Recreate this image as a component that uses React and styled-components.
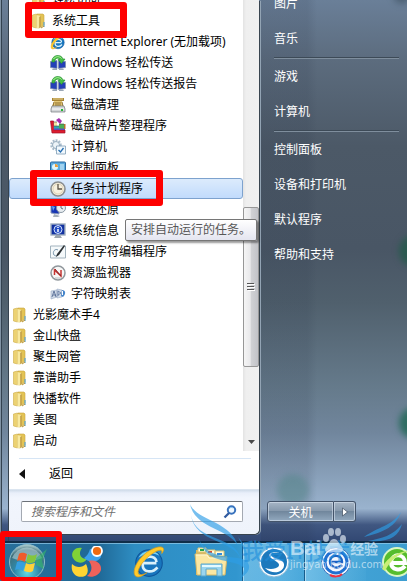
import React from "react";
import styled, { createGlobalStyle, css } from "styled-components";

const GlobalStyle = createGlobalStyle`
  * { box-sizing: border-box; }
  body {
    margin: 0;
    font-family: "Noto Sans", "Noto Sans CJK SC", sans-serif;
    font-size: 12px;
    color: #000;
  }
  button, input { font: inherit; color: inherit; }
  button { border: 0; background: none; padding: 0; text-align: left; }
  ul { list-style: none; margin: 0; padding: 0; }
  svg { display: block; flex: none; }
`;

const Desktop = styled.div`
  position: relative;
  display: flex;
  flex-direction: column;
  min-height: 100vh;
  overflow: hidden;
  background: #344a75;
`;

const StartMenu = styled.main`
  flex: 1;
  display: flex;
  padding-left: 9px;
  background:
    linear-gradient(90deg, #8193a4 0 1px, #334250 1px 2px, transparent 2px 8px, #35424f 8px 9px, transparent 9px),
    linear-gradient(180deg, #6a7f98 0%, #5c6c7e 11%, #4c5967 27%, #495665 46%, #50606d 56%, #667b8c 72%, #71869d 80%, #9ab3ce 94%, #405781 97%, #324873 100%);
`;

const ProgramsPanel = styled.section`
  display: flex;
  flex-direction: column;
  flex: 0 0 250px;
  margin-bottom: 7px;
  background: #fff;
  border-radius: 0 0 5px 5px;
  box-shadow: 1px 1px 0 #38444f, 2px 1px 0 #93a4b4;
`;

const Browser = styled.div`
  position: relative;
  display: flex;
  flex: 1;
`;

const Tree = styled.ul`
  flex: 1;
  margin-top: -11px;
`;

const indents = [2, 21, 40];

const TreeItem = styled.li`
  position: relative;
`;

const TreeRow = styled.button`
  display: flex;
  align-items: center;
  gap: 5px;
  width: 100%;
  height: 21px;
  padding-left: ${(p) => indents[p.$level]}px;
  border: 1px solid transparent;
  border-radius: 3px;
  white-space: nowrap;
  ${(p) =>
    p.$selected &&
    css`
      border-color: #7da2ce;
      background: linear-gradient(#dcebfc, #c1dbfc);
    `}
`;

const RowLabel = styled.span`
  padding-bottom: 2px;
`;

const Mark = styled.span`
  position: absolute;
  z-index: 2;
  top: -8px;
  bottom: -7px;
  left: ${(p) => p.$left}px;
  width: ${(p) => p.$width}px;
  border: 7px solid #fe0000;
  border-radius: 3px;
  pointer-events: none;
`;

const Tooltip = styled.div`
  position: absolute;
  z-index: 3;
  top: 219px;
  left: 116px;
  height: 22px;
  padding: 0 5px;
  line-height: 20px;
  color: #575757;
  white-space: nowrap;
  border: 1px solid #767676;
  border-radius: 2px;
  background: linear-gradient(#fff, #e4e5f0);
  box-shadow: 2px 2px 2px rgba(0, 0, 0, 0.4);
`;

const ScrollTrack = styled.div`
  display: flex;
  flex-direction: column;
  justify-content: space-between;
  width: 16px;
  padding-top: 207px;
  background: linear-gradient(90deg, #e3e3e3, #efefef 3px, #f0f0f0);
`;

const ScrollThumb = styled.div`
  display: flex;
  align-items: center;
  justify-content: center;
  height: 160px;
  border: 1px solid #979797;
  border-radius: 2px;
  background: linear-gradient(90deg, #f5f5f5, #e9e9eb 45%, #d1d2d5 50%, #c2c3c8);
`;

const ScrollDown = styled.button`
  display: flex;
  align-items: center;
  justify-content: center;
  height: 18px;
`;

const BackArea = styled.div`
  margin: 7px 8px 0 10px;
  border-top: 1px solid #d6e5f5;
`;

const BackButton = styled.button`
  display: flex;
  align-items: center;
  gap: 24px;
  width: 100%;
  height: 30px;
`;

const SearchArea = styled.form`
  padding: 11px 16px 12px 12px;
  border-radius: 0 0 5px 5px;
  background: linear-gradient(#cfdbe9, #e9effa 3px, #f1f5fd 8px, #eff3fb);
  border-top: 1px solid #dbe5f0;
`;

const SearchBox = styled.label`
  display: flex;
  align-items: center;
  height: 21px;
  padding: 0 5px 0 9px;
  background: #fff;
  border: 1px solid #a4a9b2;
  border-top-color: #6c7178;
  border-radius: 2px;
`;

const SearchInput = styled.input`
  flex: 1;
  min-width: 0;
  padding: 0;
  border: 0;
  outline: 0;
  background: none;
  &::placeholder { color: #6f6f6f; font-style: italic; opacity: 1; }
`;

const PlacesPanel = styled.nav`
  position: relative;
  display: flex;
  flex: 1;
  flex-direction: column;
  justify-content: space-between;
  min-width: 0;
  margin-left: 2px;
  padding: 0 8px 19px 6px;
  background: linear-gradient(90deg, rgba(35, 45, 65, 0.12) 0 46px, transparent 56px);
`;

const Places = styled.ul`
  margin-top: -14px;
  padding-left: 7px;
`;

const Place = styled.a`
  display: flex;
  align-items: center;
  height: 35px;
  color: #fff;
  text-decoration: none;
`;

const PlaceDivider = styled.li`
  height: 3px;
  border-top: 1px solid transparent;
  background: linear-gradient(#3d4a57 0 1px, #7f8e9d 1px 2px) padding-box;
`;

const Glow = styled.span`
  position: absolute;
  top: ${(p) => p.$top}px;
  right: ${(p) => p.$right}px;
  width: ${(p) => p.$size}px;
  height: ${(p) => p.$size}px;
  border-radius: 50%;
  background: ${(p) => p.$color};
  filter: blur(3px);
`;

const Power = styled.div`
  position: relative;
  display: flex;
  height: 21px;
`;

const PowerButton = styled.button`
  display: flex;
  align-items: center;
  justify-content: center;
  width: ${(p) => (p.$menu ? 22 : 67)}px;
  color: #fff;
  border: 1px solid #44546a;
  border-left-width: ${(p) => (p.$menu ? 0 : 1)}px;
  border-radius: ${(p) => (p.$menu ? "0 3px 3px 0" : "3px 0 0 3px")};
  background: linear-gradient(#a6b5c5, #8598ac 48%, #71879d 50%, #92a9bf);
  box-shadow: inset 0 0 0 1px rgba(220, 232, 244, 0.55);
`;

const Taskbar = styled.footer`
  position: relative;
  display: flex;
  height: 40px;
  border-top: 2px solid #102e49;
  background:
    linear-gradient(rgba(150, 205, 235, 0.7) 0 1px, transparent 1px),
    linear-gradient(90deg, #28709b 0, #1f6896 24%, #2e8dc2 33%, #3196cf 58%, #49a8dc 66%, #3d9ed1 100%);
`;

const TaskButton = styled.button`
  display: flex;
  flex: 0 0 ${(p) => (p.$start ? 56 : 62)}px;
  align-items: center;
  justify-content: center;
  ${(p) =>
    p.$open &&
    css`
      border-left: 1px solid #175c8c;
      background: linear-gradient(100deg, rgba(160, 217, 245, 0.5), rgba(100, 185, 225, 0.1));
      box-shadow: inset 1px 0 0 rgba(190, 230, 250, 0.7);
    `}
`;

const StartMark = styled.span`
  position: absolute;
  z-index: 4;
  left: 0;
  top: -12px;
  bottom: 0;
  width: 62px;
  border: 6px solid #fe0000;
  border-left-width: 5px;
  border-bottom-width: 4px;
  border-radius: 3px;
  pointer-events: none;
`;

const WatermarkLayer = styled.div`
  position: absolute;
  z-index: 5;
  bottom: 0;
  left: 188px;
  width: 219px;
  height: 80px;
  pointer-events: none;
`;

const BlueWatermark = styled.span`
  position: absolute;
  left: 54px;
  top: 33px;
  font-size: 22px;
  line-height: 32px;
  font-weight: 500;
  white-space: nowrap;
  color: rgba(31, 142, 220, 0.62);
`;

const SiteWatermark = styled.div`
  position: absolute;
  left: 102px;
  top: 36px;
  white-space: nowrap;
  color: rgba(240, 249, 255, 0.62);
`;

const SiteName = styled.div`
  display: flex;
  align-items: center;
  height: 22px;
  font-family: "Liberation Sans", "Noto Sans CJK SC", sans-serif;
  font-size: 20px;
  font-weight: 700;
`;

const SiteNameLocal = styled.span`
  font-size: 14px;
  padding-left: 3px;
`;

const PawMark = styled.span`
  display: flex;
  align-items: center;
  justify-content: center;
  position: relative;
  top: -8px;
  width: 26px;
`;

const SiteUrl = styled.div`
  font-size: 10px;
  line-height: 12px;
  font-family: "DejaVu Sans", sans-serif;
`;

function FolderIcon() {
  return (
    <svg width="16" height="16" viewBox="0 0 16 16">
      <path d="M1.500 2l4-1v14l-4-1z" fill="#ecd272" stroke="#cfac48" strokeWidth=".6" />
      <path d="M6 1h6l1 1v10l-5 3-2-.5z" fill="#e3c355" stroke="#c9a440" strokeWidth=".6" />
      <path d="M5.500 2l4 1v11l-3 1.500-1-.5z" fill="#f8e99f" />
      <path d="M8 4l2-1v11l-2 1z" fill="#b9933a" opacity=".7" />
      <path d="M13 9v5" stroke="#5ba5cf" strokeWidth="1.2" />
      <path d="M10 15l3-2" stroke="#b8912f" />
    </svg>
  );
}

function IeIcon({ size = 16 }) {
  return (
    <svg width={size} height={size} viewBox="0 0 32 32">
      <circle cx="16" cy="17" r="12.5" fill="#1876be" stroke="#0f559b" />
      <path d="M6 12a12 12 0 0 1 20-2 20 20 0 0 0-20 2z" fill="#76d2f5" />
      <path d="M23 17H10c0-8 13-8 13-1M10 18c0 8 9 9 14 3" fill="none" stroke="#d9f1fb" strokeWidth="2.500" />
      <path d="M3 29C-1 23 8 8 21 3c8-3 11 0 7 5 1-4-2-4-7-1C12 12 4 23 6 27c1 2 5 1 8-1-5 4-9 5-11 3z" fill="#ffca2c" stroke="#dc9e19" strokeWidth=".7" />
    </svg>
  );
}

function TransferIcon() {
  return (
    <svg width="16" height="16" viewBox="0 0 16 16">
      <path d="M.5 6.500l6.500-1v8l-6.500-1zM8.500 5.500l7 1v6l-7 1z" fill="#2440b8" stroke="#8190ae" strokeWidth=".8" />
      <path d="M3 13.500h4V15H2zM9 13.500h4l1 1.500H9z" fill="#9aa7b6" />
      <path d="M2 7C1 0 11-2 13 4h2l-3.500 4.500L8 4.500h2C8 2 5 3 4.500 7z" fill="#45be44" stroke="#218a2f" strokeWidth=".6" />
      <path d="M3.500 4c2-3 6-3 8-.5" fill="none" stroke="#b5f49e" />
    </svg>
  );
}

function CleanupIcon() {
  return (
    <svg width="16" height="16" viewBox="0 0 16 16">
      <path d="M2 1h12v3H2z" fill="#a78435" />
      <path d="M3 2h10" stroke="#ead491" />
      <path d="M4 4h8l1 5H2z" fill="#e4c775" />
      <path d="M4 5l-1 4M6 5v4M8 5v4M10 5v4M12 5l1 4" stroke="#775820" strokeWidth=".8" />
      <path d="M2 9h12l1 3v3H1v-3z" fill="#d2d5d7" stroke="#73797d" strokeWidth=".7" />
      <path d="M2 12h12" stroke="#fff" /><path d="M11 13h2" stroke="#21b532" strokeWidth="2" />
    </svg>
  );
}

function DefragIcon() {
  return (
    <svg width="16" height="16" viewBox="0 0 16 16">
      <path d="M.5 3h3v9H15v3H2z" fill="#dd1c2f" stroke="#9f1328" strokeWidth=".7" />
      <path d="M4 4h3v4H4z" fill="#f2e7a0" /><path d="M6 2l3-2 3 3-2 3z" fill="#a32cad" />
      <path d="M4 8h5v3H4z" fill="#28aab4" /><path d="M9 6h5v5H9z" fill="#4caf55" />
      <path d="M4 10.500h11v1.500H4z" fill="#604abb" /><path d="M14 6h1.500v5H14z" fill="#b5702f" />
      <path d="M4 4h3M9 6h5M4 8h5" stroke="#444" strokeWidth=".6" />
    </svg>
  );
}

function ComputerManageIcon() {
  return (
    <svg width="16" height="16" viewBox="0 0 16 16">
      <circle cx="6" cy="6" r="4.500" fill="none" stroke="#a9bccb" strokeWidth="2.500" strokeDasharray="1.8 1.1" />
      <circle cx="6" cy="6" r="3.500" fill="#edf4f8" stroke="#98adbd" />
      <path d="M6.500 7h9v8h-9z" fill="#f2f9fd" stroke="#7f9db5" strokeWidth=".8" />
      <path d="M8.500 11l2 2 3-4" fill="none" stroke="#266eb2" strokeWidth="1.3" />
    </svg>
  );
}

function ControlPanelIcon() {
  return (
    <svg width="16" height="16" viewBox="0 0 16 16">
      <rect x=".5" y="2" width="15" height="11" rx="1" fill="#5aaade" stroke="#28689f" />
      <circle cx="5" cy="7" r="3" fill="#dff5fa" /><path d="M5 7V4a3 3 0 0 1 3 3z" fill="#ee9d33" />
      <path d="M10 5h4M10 7h4M10 9h4" stroke="#e7f9ff" />
    </svg>
  );
}

function ClockIcon() {
  return (
    <svg width="16" height="16" viewBox="0 0 16 16">
      <circle cx="8" cy="8" r="7" fill="#f7f1df" stroke="#8b8e90" strokeWidth="1.6" />
      <circle cx="8" cy="8" r="5" fill="none" stroke="#d4c5a5" strokeWidth=".7" />
      <path d="M8 3v5h4" fill="none" stroke="#5c5448" strokeWidth="1.3" />
    </svg>
  );
}

function RestoreIcon() {
  return (
    <svg width="16" height="16" viewBox="0 0 16 16">
      <path d="M1 3l8 1v8l-8-1z" fill="#1735b3" stroke="#8897b9" />
      <circle cx="11" cy="6" r="4.500" fill="#e8edf0" stroke="#8b98a5" />
      <path d="M11 3v3l2 1" fill="none" stroke="#66717d" />
      <path d="M4 12l6 2-2 1H3z" fill="#a8b1ba" /><path d="M2 4l3 1-2 4z" fill="#67a9f4" />
    </svg>
  );
}

function InfoIcon() {
  return (
    <svg width="16" height="16" viewBox="0 0 16 16">
      <rect x="1" y="1" width="14" height="11" fill="#1231a0" stroke="#a2afbf" strokeWidth="1.4" />
      <circle cx="8" cy="6.500" r="4" fill="#244dc4" stroke="#d7e5ff" />
      <path d="M8 4v1M8 6v3" stroke="#fff" strokeWidth="1.5" />
      <path d="M6 12h4l2 3H4z" fill="#9ca5ae" />
    </svg>
  );
}

function CharEditIcon() {
  return (
    <svg width="16" height="16" viewBox="0 0 16 16">
      <path d="M.5 2h15v12H.5z" fill="#f5f9fb" stroke="#a3b3be" />
      <path d="M8 6c-3-2-6 2-4 5 2 2 5 0 5-2" fill="none" stroke="#7794ab" />
      <path d="M7 10l7-9 1 1-6 9-3 2z" fill="#2b3034" />
    </svg>
  );
}

function MonitorIcon() {
  return (
    <svg width="16" height="16" viewBox="0 0 16 16">
      <circle cx="8" cy="8" r="7" fill="#f7f7f6" stroke="#90979c" strokeWidth="1.5" />
      <path d="M4.500 10V5L11 11V5" fill="none" stroke="#c53432" strokeWidth="1.5" />
      <path d="M5 4l6 7" stroke="#8a2528" /><path d="M5 13h6" stroke="#bcc2c5" />
    </svg>
  );
}

function CharMapIcon() {
  return (
    <svg width="16" height="16" viewBox="0 0 16 16">
      <path d="M1 5l6-1v7l-6 2zM7 3l5 1v7l-5 1z" fill="#cfd9e7" stroke="#9aacc6" strokeWidth=".6" />
      <path d="M2 11l2-6 2 6M3 9h3" fill="none" stroke="#4d638d" strokeWidth=".8" />
      <path d="M8 10V5l3 2-3 2" fill="none" stroke="#5a729d" strokeWidth=".8" />
      <path d="M12 4c4 0 4 4 1 7l-2-1z" fill="#4685ca" /><path d="M12.500 5v4" stroke="#fff" />
    </svg>
  );
}

function SearchIcon() {
  return (
    <svg width="14" height="14" viewBox="0 0 14 14">
      <circle cx="8.500" cy="5" r="3.700" fill="#eff8ff" stroke="#3972bd" strokeWidth="2" />
      <path d="M6 8l-4.500 4.500" stroke="#315b9f" strokeWidth="2.300" />
      <path d="M6 4c1-2 3-2 4-1" fill="none" stroke="#83bfed" />
    </svg>
  );
}

function OrbIcon() {
  return (
    <svg width="38" height="36" viewBox="0 0 38 36">
      <defs>
        <radialGradient id="orb" cx=".5" cy=".8" r=".8">
          <stop stopColor="#62d9e4" /><stop offset=".45" stopColor="#2f88a8" /><stop offset=".8" stopColor="#3f6f7c" /><stop offset="1" stopColor="#b9d6d6" />
        </radialGradient>
      </defs>
      <circle cx="18" cy="18" r="17.500" fill="url(#orb)" stroke="#8fbcc8" />
      <path d="M3 14a16 16 0 0 1 30 0c-8 4-21 4-30 0z" fill="#edffff" opacity=".4" />
      <path d="M27 14l11-9-5 12 2 8-8-4z" fill="#35b869" opacity=".6" />
      <path d="M10 10c3-2 5-1 8 0l-2 8c-3-2-6-2-8-1z" fill="#ef5b2b" />
      <path d="M19 10c3 2 6 2 9 0l-2 8c-3 1-6 2-9 0z" fill="#84c63e" />
      <path d="M8 18c3-1 5 0 8 1l-2 8c-3-2-6-2-8-1z" fill="#369fe0" />
      <path d="M17 19c3 2 6 1 9 0l-2 8c-3 2-6 1-9 0z" fill="#ffd13a" />
    </svg>
  );
}

function BallsIcon() {
  return (
    <svg width="32" height="32" viewBox="0 0 32 32">
      <path d="M11 2C4 0-1 7 2 12c3 6 11 6 14 1C9 13 7 7 11 2z" fill="#80d236" />
      <path d="M19 3c-1 4-3 7-6 9 5 5 14 5 17-1V4z" fill="#3ba0ed" />
      <path d="M1 18c-2 10 6 15 13 12 4-3 3-8 1-12-4 4-10 4-14 0z" fill="#ffd432" />
      <path d="M18 15c7-2 13 3 12 9-2 6-9 8-14 6 5-4 6-9 2-15z" fill="#ee625b" />
      <circle cx="26" cy="5" r="5" fill="#ee6b13" stroke="#fff" strokeWidth="1.8" />
    </svg>
  );
}

function ExplorerIcon() {
  return (
    <svg width="34" height="32" viewBox="0 0 34 32">
      <path d="M2 4h7l2 2h19v23H2z" fill="#d7b961" />
      <path d="M4 2h8v4H4zM12 4h9v5h-9zM21 5h9v5h-9z" fill="#fffbdc" stroke="#d8c375" />
      <path d="M6 3h4v2H6z" fill="#24a64a" /><path d="M14 5h4v2h-4z" fill="#e14c28" /><path d="M23 7h5v2h-5z" fill="#318cdd" />
      <path d="M1 8h13l2 3h17l-2 18H3z" fill="#fbe7a2" stroke="#d6b968" />
      <path d="M2 9h11l2 3h16" fill="none" stroke="#fff7cf" />
      <path d="M7 18h21v12h-5v-7H12v7H7z" fill="#9ad5ee" stroke="#5ba7cb" />
      <path d="M8 19h19v2H8z" fill="#e4faff" />
    </svg>
  );
}

function SogouIcon() {
  return (
    <svg width="32" height="32" viewBox="0 0 32 32">
      <circle cx="16" cy="16" r="15" fill="#f8fcff" stroke="#8bbbd9" />
      <circle cx="16" cy="16" r="13" fill="#1c78bc" />
      <path d="M25 8C15 3 8 8 13 12l6 4c6 4-2 9-12 6 8 8 20 4 19-4-1-6-12-5-13-9 0-3 7-3 12-1z" fill="#fff" />
    </svg>
  );
}

function BaiduBrowserIcon() {
  return (
    <svg width="32" height="32" viewBox="0 0 32 32">
      <circle cx="16" cy="16" r="14.500" fill="#f4f8ff" stroke="#3972bc" />
      <circle cx="16" cy="16" r="11" fill="none" stroke="#206fd1" strokeWidth="3" />
      <path d="M11 16h11c0-8-11-8-12-1 0 7 8 8 12 4" fill="none" stroke="#1b62c4" strokeWidth="2.500" />
      <path d="M10 29c4 2 9 2 12-1" fill="none" stroke="#ed3340" strokeWidth="2" />
    </svg>
  );
}

function GreenBrowserIcon() {
  return (
    <svg width="32" height="32" viewBox="0 0 32 32">
      <circle cx="16" cy="16" r="14" fill="#56bd2e" stroke="#d9f6c4" strokeWidth="2" />
      <path d="M9 17h15c0-10-13-10-14-1 0 9 10 9 14 4" fill="none" stroke="#fff" strokeWidth="4" />
      <path d="M1 23C4 13 14 6 30 4 18 8 10 13 4 25z" fill="#c9ef77" />
    </svg>
  );
}

function WingsDrawing() {
  return (
    <svg width="219" height="80" viewBox="0 0 219 80">
      <g fill="#2d9ee7" opacity=".65">
        <path d="M2 3c7 17 41 17 48 42-9-18-43-17-48-42z" />
        <path d="M3 14c5 28 45 19 50 45C47 38 7 43 3 14z" />
        <path d="M11 38c8 20 33 17 43 20 11 4 8 13 0 18 8-10-3-13-12-15-15-3-26-6-31-23z" />
        <path d="M50 36c12 13 13 30 3 42 6-15 6-27-3-42z" />
        <path d="M213 11c-10 15-22 14-37 25 21-5 32-11 37-25z" />
        <path d="M214 23c-9 12-20 14-34 17 21 2 31-5 34-17z" />
      </g>
    </svg>
  );
}

function PawIcon() {
  return (
    <svg width="24" height="27" viewBox="0 0 24 27">
      <g fill="currentColor">
        <ellipse cx="4" cy="11" rx="3" ry="4" /><ellipse cx="9" cy="5" rx="3" ry="4" />
        <ellipse cx="16" cy="5" rx="3" ry="4" /><ellipse cx="21" cy="12" rx="3" ry="4" />
        <path d="M12 12c4 0 5 5 8 8 3 4-1 7-8 5-7 2-11-1-8-5 3-3 4-8 8-8z" />
      </g>
    </svg>
  );
}

const programs = [
  { name: "轻松访问", icon: FolderIcon, level: 1 },
  { name: "系统工具", icon: FolderIcon, level: 1, mark: { left: 16, width: 102 } },
  { name: "Internet Explorer (无加载项)", icon: IeIcon, level: 2 },
  { name: "Windows 轻松传送", icon: TransferIcon, level: 2 },
  { name: "Windows 轻松传送报告", icon: TransferIcon, level: 2 },
  { name: "磁盘清理", icon: CleanupIcon, level: 2 },
  { name: "磁盘碎片整理程序", icon: DefragIcon, level: 2 },
  { name: "计算机", icon: ComputerManageIcon, level: 2 },
  { name: "控制面板", icon: ControlPanelIcon, level: 2 },
  { name: "任务计划程序", icon: ClockIcon, level: 2, selected: true, mark: { left: 21, width: 133 } },
  { name: "系统还原", icon: RestoreIcon, level: 2 },
  { name: "系统信息", icon: InfoIcon, level: 2 },
  { name: "专用字符编辑程序", icon: CharEditIcon, level: 2 },
  { name: "资源监视器", icon: MonitorIcon, level: 2 },
  { name: "字符映射表", icon: CharMapIcon, level: 2 },
  { name: "光影魔术手4", icon: FolderIcon, level: 0 },
  { name: "金山快盘", icon: FolderIcon, level: 0 },
  { name: "聚生网管", icon: FolderIcon, level: 0 },
  { name: "靠谱助手", icon: FolderIcon, level: 0 },
  { name: "快播软件", icon: FolderIcon, level: 0 },
  { name: "美图", icon: FolderIcon, level: 0 },
  { name: "启动", icon: FolderIcon, level: 0 },
];

const places = ["图片", "音乐", null, "游戏", "计算机", null, "控制面板", "设备和打印机", "默认程序", "帮助和支持"];

const tasks = [
  { label: "聊天", icon: <BallsIcon /> },
  { label: "Internet Explorer", icon: <IeIcon size={34} /> },
  { label: "资源管理器", icon: <ExplorerIcon /> },
  { label: "搜狗浏览器", icon: <SogouIcon />, open: true },
  { label: "百度浏览器", icon: <BaiduBrowserIcon />, open: true },
  { label: "安全浏览器", icon: <GreenBrowserIcon /> },
];

export default function App() {
  return (
    <Desktop>
      <GlobalStyle />
      <StartMenu>
        <ProgramsPanel>
          <Browser>
            <Tree>
              {programs.map(({ name, icon: Icon, level, selected, mark }) => (
                <TreeItem key={name}>
                  <TreeRow type="button" $level={level} $selected={selected}>
                    <Icon />
                    <RowLabel>{name}</RowLabel>
                  </TreeRow>
                  {mark && <Mark $left={mark.left} $width={mark.width} />}
                </TreeItem>
              ))}
            </Tree>
            <ScrollTrack>
              <ScrollThumb>
                <svg width="8" height="8" viewBox="0 0 8 8">
                  <path d="M0 .5h7M0 3.500h7M0 6.500h7" stroke="#555" />
                  <path d="M1 1.500h7M1 4.500h7M1 7.500h7" stroke="#fff" />
                </svg>
              </ScrollThumb>
              <ScrollDown type="button" aria-label="向下滚动">
                <svg width="7" height="4" viewBox="0 0 7 4"><path d="M0 0h7L3.500 4z" fill="#4a4a4a" /></svg>
              </ScrollDown>
            </ScrollTrack>
            <Tooltip role="tooltip">安排自动运行的任务。</Tooltip>
          </Browser>
          <BackArea>
            <BackButton type="button">
              <svg width="6" height="10" viewBox="0 0 6 10"><path d="M6 0v10L0 5z" fill="#111" /></svg>
              <RowLabel>返回</RowLabel>
            </BackButton>
          </BackArea>
          <SearchArea>
            <SearchBox>
              <SearchInput type="text" placeholder="搜索程序和文件" aria-label="搜索程序和文件" />
              <SearchIcon />
            </SearchBox>
          </SearchArea>
        </ProgramsPanel>
        <PlacesPanel>
          <Glow $top={-14} $right={-4} $size={18} $color="rgba(60, 80, 95, .6)" />
          <Glow $top={235} $right={-24} $size={32} $color="#2b5a50" />
          <Glow $top={407} $right={-24} $size={32} $color="#2f6d62" />
          <Glow $top={474} $right={98} $size={32} $color="rgba(76, 130, 130, .45)" />
          <Places>
            {places.map((name, i) =>
              name ? (
                <li key={name}><Place href="#"><RowLabel>{name}</RowLabel></Place></li>
              ) : (
                <PlaceDivider key={i} role="separator" />
              )
            )}
          </Places>
          <Power>
            <PowerButton type="button">关机</PowerButton>
            <PowerButton type="button" $menu aria-label="关机选项">
              <svg width="6" height="10" viewBox="0 0 6 10"><path d="M.5 1v8l5-4z" fill="#fff" stroke="#3d4c5d" strokeWidth=".7" /></svg>
            </PowerButton>
          </Power>
        </PlacesPanel>
      </StartMenu>
      <Taskbar>
        <TaskButton type="button" $start aria-label="开始"><OrbIcon /></TaskButton>
        {tasks.map((t) => (
          <TaskButton key={t.label} type="button" $open={t.open} aria-label={t.label}>
            {t.icon}
          </TaskButton>
        ))}
        <StartMark />
      </Taskbar>
      <WatermarkLayer aria-hidden="true">
        <WingsDrawing />
        <BlueWatermark>我爱IT技术</BlueWatermark>
        <SiteWatermark>
          <SiteName>
            Bai
            <PawMark><PawIcon /></PawMark>
            <SiteNameLocal>经验</SiteNameLocal>
          </SiteName>
          <SiteUrl>jingyan.baidu.com</SiteUrl>
        </SiteWatermark>
      </WatermarkLayer>
    </Desktop>
  );
}
